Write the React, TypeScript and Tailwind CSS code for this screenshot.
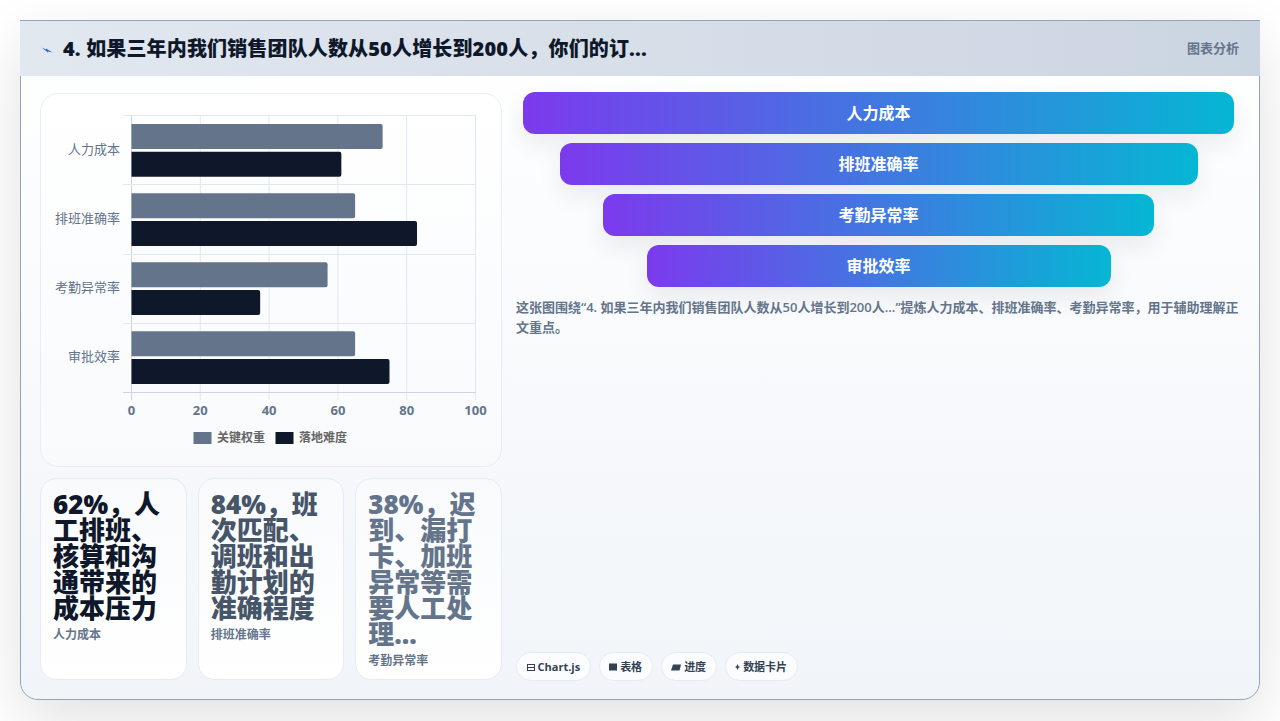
import React from 'react';

const fontStack = { fontFamily: '"Open Sans", "Noto Sans CJK SC", sans-serif' };

const rows = [
  { label: '人力成本', top: 30, weight: 73, difficulty: 61 },
  { label: '排班准确率', top: 99.3, weight: 65, difficulty: 83 },
  { label: '考勤异常率', top: 168.3, weight: 57, difficulty: 37.4 },
  { label: '审批效率', top: 237.3, weight: 65, difficulty: 75 },
];

const funnel = [
  { label: '人力成本', width: 'w-[98%]' },
  { label: '排班准确率', width: 'w-[88%]' },
  { label: '考勤异常率', width: 'w-[76%]' },
  { label: '审批效率', width: 'w-[64%]' },
];

const stats = [
  { value: '62%，人工排班、核算和沟通带来的成本压力', label: '人力成本', color: 'text-[#0f172a]' },
  { value: '84%，班次匹配、调班和出勤计划的准确程度', label: '排班准确率', color: 'text-[#475569]' },
  { value: '38%，迟到、漏打卡、加班异常等需要人工处理...', label: '考勤异常率', color: 'text-[#64748b]' },
];

const tags = [
  {
    label: 'Chart.js',
    icon: (
      <svg width="8" height="7" viewBox="0 0 8 7">
        <path d="M0 0H8V7H0ZM1 1V3H7V1ZM1 4V6H7V4Z" fill="#334155" fillRule="evenodd" />
      </svg>
    ),
  },
  {
    label: '表格',
    icon: (
      <svg width="8" height="8" viewBox="0 0 8 8">
        <rect width="8" height="7" y="0.5" fill="#334155" />
      </svg>
    ),
  },
  {
    label: '进度',
    icon: (
      <svg width="10" height="7" viewBox="0 0 10 7">
        <path d="M2 0.5H10L8.5 6.5H0Z" fill="#334155" />
      </svg>
    ),
  },
  {
    label: '数据卡片',
    icon: (
      <svg width="5" height="6" viewBox="0 0 5 6">
        <path d="M2.5 0L3.5 2.2L5 3L3.5 3.8L2.5 6L1.5 3.8L0 3L1.5 2.2Z" fill="#334155" />
      </svg>
    ),
  },
];

const X0 = 90.5;
const X100 = 434.5;
const xOf = (v: number) => X0 + ((X100 - X0) * v) / 100;
const rowYs = [21.5, 90.5, 160.5, 229.5, 298.5];

const BarChart = () => (
  <svg width="460" height="372" viewBox="0 0 460 372" className="block">
    {[0, 20, 40, 60, 80, 100].map((v) => (
      <g key={v}>
        <line x1={xOf(v)} x2={xOf(v)} y1={21} y2={306} stroke={v === 0 ? '#cbd5e1' : '#e2e8f0'} />
        <text x={xOf(v)} y={321} textAnchor="middle" fontSize="13" fontWeight="700" fill="#64748b">
          {v}
        </text>
      </g>
    ))}
    {rowYs.map((y, i) => (
      <line key={y} x1={82} x2={X100} y1={y} y2={y} stroke={i === 4 ? '#cbd5e1' : '#e2e8f0'} />
    ))}
    {rows.map((row) => (
      <g key={row.label}>
        <text x={79} y={row.top + 29.5} textAnchor="end" fontSize="13" fill="#64748b">
          {row.label}
        </text>
        <path
          d={`M${X0} ${row.top}H${xOf(row.weight) - 2}a2 2 0 0 1 2 2V${row.top + 23}a2 2 0 0 1 -2 2H${X0}Z`}
          fill="#64748b"
        />
        <path
          d={`M${X0} ${row.top + 27.7}H${xOf(row.difficulty) - 2}a2 2 0 0 1 2 2V${row.top + 50.7}a2 2 0 0 1 -2 2H${X0}Z`}
          fill="#0f172a"
        />
      </g>
    ))}
    <rect x="152.5" y="338" width="18" height="12" fill="#64748b" />
    <text x="176" y="348" fontSize="12" fontWeight="600" fill="#666666">关键权重</text>
    <rect x="234.5" y="338" width="18" height="12" fill="#0f172a" />
    <text x="258" y="348" fontSize="12" fontWeight="600" fill="#666666">落地难度</text>
  </svg>
);

export default function App() {
  return (
    <div className="h-[721px] w-[1280px] overflow-hidden bg-white p-5" style={fontStack}>
      <div className="flex h-[680px] flex-col overflow-visible rounded-[18px] border border-[#94a3b8] bg-[linear-gradient(180deg,#ffffff,#f1f5f9)] shadow-[0_20px_60px_rgba(0,0,0,0.12)]">
        <div className="-mx-px -mt-px flex h-[56px] shrink-0 items-center justify-between border-t border-[#94a3b8] bg-[linear-gradient(90deg,#e2e8f0,#cbd5e1)] px-[21px]">
          <div className="flex items-center gap-[10px]">
            <svg width="12" height="8" viewBox="0 0 12 8" className="mt-[2px]">
              <path d="M0.5 1.5L5 3.5L5 2.5L11.5 6.5L7 5.5L7 6.5Z" fill="#2563eb" />
            </svg>
            <h1 className="text-[20px] font-extrabold leading-none tracking-[0.15px] text-[#0f172a]">
              4. 如果三年内我们销售团队人数从50人增长到200人，你们的订...
            </h1>
          </div>
          <span className="text-[13px] font-bold text-[#64748b]">图表分析</span>
        </div>

        <div className="grid min-h-0 flex-1 grid-cols-[462px_725px] gap-[14px] pb-[19px] pl-[19px] pt-[16px]">
          <div className="mt-px flex min-h-0 flex-col gap-[11px]">
            <div className="h-[374px] shrink-0 rounded-[18px] border border-[#e8edf3] bg-[linear-gradient(180deg,#ffffff,#f8fafc)]">
              <BarChart />
            </div>
            <div className="grid min-h-0 flex-1 grid-cols-3 gap-[11px]">
              {stats.map((stat) => (
                <div
                  key={stat.label}
                  className="rounded-[16px] border border-[#e4ecf7] bg-[linear-gradient(180deg,#f8fafc,#ffffff)] px-[12px] pt-[12px]"
                >
                  <div className={`text-[26px] font-black leading-[26px] ${stat.color}`}>{stat.value}</div>
                  <div className="mt-[6px] text-[12px] font-semibold leading-[16px] text-[#64748b]">
                    {stat.label}
                  </div>
                </div>
              ))}
            </div>
          </div>

          <div className="-mb-px flex min-h-0 flex-col">
            <div className="flex flex-col items-center gap-[9px]">
              {funnel.map((item) => (
                <div
                  key={item.label}
                  className={`flex h-[42px] items-center justify-center rounded-[12px] bg-[linear-gradient(90deg,#7c3aed,#06b6d4)] text-[16px] font-bold text-white shadow-[0_10px_24px_rgba(15,23,42,0.08)] ${item.width}`}
                >
                  {item.label}
                </div>
              ))}
            </div>
            <p className="mt-[10px] text-[13px] font-semibold leading-[20px] text-[#64748b]">
              这张图围绕“4. 如果三年内我们销售团队人数从50人增长到200人...”提炼人力成本、排班准确率、考勤异常率，用于辅助理解正文重点。
            </p>
            <div className="mt-auto flex gap-[8px]">
              {tags.map((tag) => (
                <span
                  key={tag.label}
                  className="flex h-[29px] items-center gap-[3px] rounded-full border border-[#e6ebf2] bg-white/70 px-[9.5px] pt-px text-[11px] font-bold text-[#334155]"
                >
                  {tag.icon}
                  {tag.label}
                </span>
              ))}
            </div>
          </div>
        </div>
      </div>
    </div>
  );
}
